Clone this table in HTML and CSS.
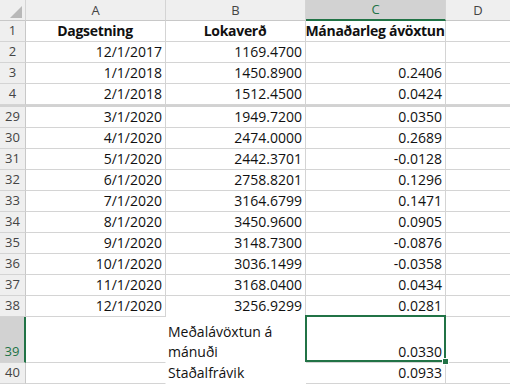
FILE: index.html
```html
<!DOCTYPE html>
<html>
<head>
<meta charset="utf-8">
<link rel="stylesheet" href="styles.css">
</head>
<body>
<div class="sheet">
  <div class="row hdr">
    <div class="corner"><span class="tri"></span></div>
    <div class="ch">A</div>
    <div class="ch">B</div>
    <div class="ch selc">C</div>
    <div class="ch last">D</div>
  </div>
  <div class="row">
    <div class="rh">1</div>
    <div class="c b ctr">Dagsetning</div>
    <div class="c b ctr">Lokaverð</div>
    <div class="c b ctr">Mánaðarleg ávöxtun</div>
    <div class="c last"></div>
  </div>
  <div class="row"><div class="rh">2</div><div class="c">12/1/2017</div><div class="c">1169.4700</div><div class="c"></div><div class="c last"></div></div>
  <div class="row"><div class="rh">3</div><div class="c">1/1/2018</div><div class="c">1450.8900</div><div class="c">0.2406</div><div class="c last"></div></div>
  <div class="row short"><div class="rh">4</div><div class="c">2/1/2018</div><div class="c">1512.4500</div><div class="c">0.0424</div><div class="c last"></div></div>
  <div class="band"></div>
  <div class="row"><div class="rh">29</div><div class="c">3/1/2020</div><div class="c">1949.7200</div><div class="c">0.0350</div><div class="c last"></div></div>
  <div class="row"><div class="rh">30</div><div class="c">4/1/2020</div><div class="c">2474.0000</div><div class="c">0.2689</div><div class="c last"></div></div>
  <div class="row"><div class="rh">31</div><div class="c">5/1/2020</div><div class="c">2442.3701</div><div class="c">-0.0128</div><div class="c last"></div></div>
  <div class="row"><div class="rh">32</div><div class="c">6/1/2020</div><div class="c">2758.8201</div><div class="c">0.1296</div><div class="c last"></div></div>
  <div class="row"><div class="rh">33</div><div class="c">7/1/2020</div><div class="c">3164.6799</div><div class="c">0.1471</div><div class="c last"></div></div>
  <div class="row"><div class="rh">34</div><div class="c">8/1/2020</div><div class="c">3450.9600</div><div class="c">0.0905</div><div class="c last"></div></div>
  <div class="row"><div class="rh">35</div><div class="c">9/1/2020</div><div class="c">3148.7300</div><div class="c">-0.0876</div><div class="c last"></div></div>
  <div class="row"><div class="rh">36</div><div class="c">10/1/2020</div><div class="c">3036.1499</div><div class="c">-0.0358</div><div class="c last"></div></div>
  <div class="row"><div class="rh">37</div><div class="c">11/1/2020</div><div class="c">3168.0400</div><div class="c">0.0434</div><div class="c last"></div></div>
  <div class="row"><div class="rh">38</div><div class="c">12/1/2020</div><div class="c nob">3256.9299</div><div class="c">0.0281</div><div class="c last"></div></div>
  <div class="row tall">
    <div class="rh selr">39</div>
    <div class="c nor"></div>
    <div class="c left nor nob">Meðalávöxtun á mánuði</div>
    <div class="c sel">0.0330<span class="handle"></span></div>
    <div class="c last"></div>
  </div>
  <div class="row">
    <div class="rh">40</div>
    <div class="c nor"></div>
    <div class="c left nor nob">Staðalfrávik</div>
    <div class="c">0.0933</div>
    <div class="c last"></div>
  </div>
</div>
</body>
</html>
```
FILE: styles.css
```css
* { box-sizing: border-box; }
html, body { margin: 0; padding: 0; background: #fff; }
body {
  width: 510px;
  height: 384px;
  overflow: hidden;
  font-family: "Open Sans", "Liberation Sans", sans-serif;
  color: #111;
}
.sheet { width: 510px; }
.row {
  display: grid;
  grid-template-columns: 26px 140px 140px 140px 1fr;
  height: 21px;
}
.row.short { height: 20px; }
.row.tall { height: 46px; }
.band { height: 3px; background: #d2d2d2; }

.hdr .corner,
.hdr .ch {
  background: #efefef;
  border-right: 1px solid #d4d4d4;
  border-bottom: 1px solid #c8c8c8;
  font-size: 13px;
  color: #444;
  display: flex;
  align-items: center;
  justify-content: center;
  line-height: 19px;
}
.hdr .ch.last { border-right: none; }
.hdr .ch.selc {
  background: #d2d2d2;
  color: #217346;
  border-bottom: 2px solid #217346;
}
.corner { position: relative; }
.tri {
  width: 0;
  height: 0;
  border-left: 12px solid transparent;
  border-bottom: 12px solid #b8b8b8;
  position: absolute;
  right: 3px;
  bottom: 2px;
}
.rh {
  background: #efefef;
  border-right: 1px solid #c8c8c8;
  border-bottom: 1px solid #d4d4d4;
  font-size: 13px;
  color: #444;
  display: flex;
  align-items: flex-end;
  justify-content: center;
  padding-bottom: 1px;
  line-height: 19px;
}
.rh.selr {
  background: #d2d2d2;
  color: #217346;
  border-right: 2px solid #217346;
}
.c {
  border-right: 1px solid #d4d4d4;
  border-bottom: 1px solid #d4d4d4;
  font-size: 14px;
  line-height: 20px;
  display: flex;
  align-items: flex-end;
  justify-content: flex-end;
  text-align: right;
  padding: 0 3px 0 2px;
  white-space: nowrap;
  position: relative;
}
.c.b { font-weight: bold; letter-spacing: -0.3px; }
.c.ctr { justify-content: center; text-align: center; }
.c.left { justify-content: flex-start; text-align: left; white-space: normal; padding-bottom: 0; }
.c.last { border-right: none; }
.c.nob { border-bottom-color: #fff; }
.c.nor { border-right-color: #fff; }
.c.sel::after {
  content: "";
  position: absolute;
  top: -2px;
  left: -1px;
  right: -1px;
  bottom: 0;
  border: 2px solid #217346;
  pointer-events: none;
}
.handle {
  position: absolute;
  right: -4px;
  bottom: -3px;
  width: 7px;
  height: 7px;
  background: #217346;
  border: 1px solid #fff;
  z-index: 2;
}
```
